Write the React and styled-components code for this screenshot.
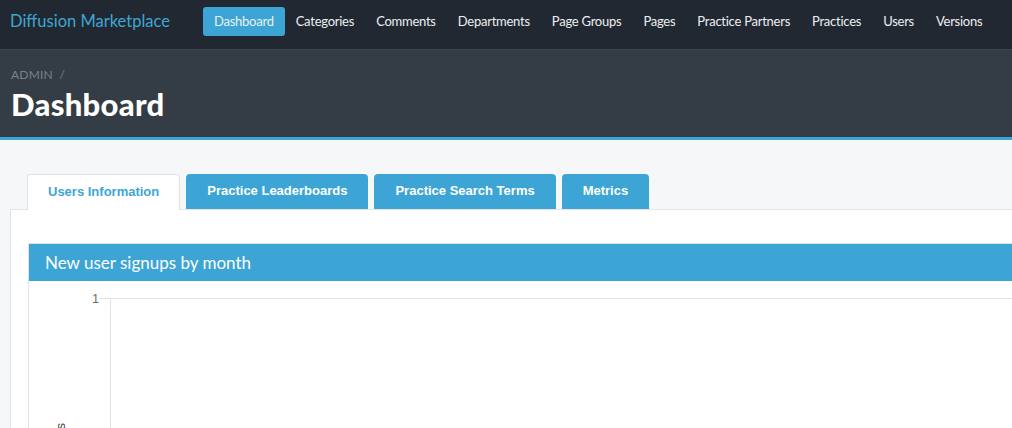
import React from 'react';
import styled, { createGlobalStyle } from 'styled-components';

const GlobalStyle = createGlobalStyle`
  body {
    margin: 0;
    background: #f6f7f9;
    font-family: 'Lato', 'Liberation Sans', sans-serif;
    overflow: hidden;
  }
`;

const Navbar = styled.nav`
  height: 49px;
  background: #222831;
  border-bottom: 1px solid #3e454e;
  display: flex;
  align-items: center;
  padding: 0 10px;
`;

const Brand = styled.div`
  flex: 0 0 193px;
  color: #3ea6d4;
  font-size: 16.5px;
  margin-top: -8px;
  white-space: nowrap;
`;

const NavItems = styled.div`
  display: flex;
  align-items: center;
  margin-top: -6px;
`;

const NavItem = styled.a`
  color: #eceff1;
  font-size: 13px;
  letter-spacing: -0.25px;
  padding: 0 11px;
  height: 29px;
  line-height: 29px;
  border-radius: 3px;
  background: ${p => (p.$active ? '#3da5d5' : 'transparent')};
  white-space: nowrap;
`;

const Header = styled.header`
  background: #343c45;
  border-bottom: 3px solid #3da5d5;
  height: 90px;
  padding: 0 11px;
  box-sizing: border-box;
`;

const Crumb = styled.div`
  padding-top: 17px;
  font-size: 12px;
  color: #79828b;
  letter-spacing: 0.2px;
`;

const Title = styled.h1`
  margin: 3px 0 0;
  font-size: 31px;
  font-weight: 900;
  color: #ffffff;
  letter-spacing: 0.3px;
`;

const Content = styled.main`
  padding: 34px 0 0 10px;
`;

const Tabs = styled.div`
  display: flex;
  align-items: flex-start;
  gap: 6px;
  padding-left: 17px;
  margin-bottom: -1px;
  position: relative;
  z-index: 1;
`;

const Tab = styled.div`
  font-family: 'Liberation Sans', Arial, sans-serif;
  font-weight: 700;
  font-size: 13px;
  box-sizing: border-box;
  display: flex;
  align-items: center;
  border-radius: 4px 4px 0 0;
  white-space: nowrap;
  ${p =>
    p.$active
      ? `
    height: 36px;
    padding: 0 20px 2px;
    background: #ffffff;
    color: #3ea6d4;
    border: 1px solid #dfe3e8;
    border-bottom: none;
  `
      : `
    height: 35px;
    padding: 0 21px 3px;
    background: #3da5d5;
    color: #ffffff;
  `}
`;

const Panel = styled.section`
  background: #ffffff;
  border: 1px solid #e3e5e8;
  border-right: none;
  padding: 33px 0 0 17px;
  height: 300px;
`;

const Card = styled.div`
  border: 1px solid #e3e3e3;
  border-right: none;
`;

const CardHeader = styled.div`
  background: #3da5d5;
  color: #ffffff;
  height: 37px;
  display: flex;
  align-items: center;
  padding-left: 16px;
  font-size: 17px;
`;

const Chart = styled.svg`
  display: block;
  width: 100%;
  height: 160px;
`;

const tabs = ['Users Information', 'Practice Leaderboards', 'Practice Search Terms', 'Metrics'];
const links = ['Dashboard', 'Categories', 'Comments', 'Departments', 'Page Groups', 'Pages', 'Practice Partners', 'Practices', 'Users', 'Versions'];

export default function App() {
  return (
    <>
      <GlobalStyle />
      <Navbar>
        <Brand>Diffusion Marketplace</Brand>
        <NavItems>
          {links.map((l, i) => (
            <NavItem key={l} $active={i === 0}>{l}</NavItem>
          ))}
        </NavItems>
      </Navbar>
      <Header>
        <Crumb>ADMIN&nbsp; /</Crumb>
        <Title>Dashboard</Title>
      </Header>
      <Content>
        <Tabs>
          {tabs.map((t, i) => (
            <Tab key={t} $active={i === 0}>{t}</Tab>
          ))}
        </Tabs>
        <Panel>
          <Card>
            <CardHeader>New user signups by month</CardHeader>
            <Chart>
              <line x1="71" y1="17.5" x2="2000" y2="17.5" stroke="#e2e2e2" />
              <line x1="81.5" y1="17" x2="81.5" y2="300" stroke="#e2e2e2" />
              <text x="70" y="22" fontSize="12" fill="#666" textAnchor="end" fontFamily="Liberation Sans, sans-serif">1</text>
              <text x="0" y="0" fontSize="13" fill="#444" fontFamily="Liberation Sans, sans-serif" transform="translate(36 176) rotate(-90)">Users</text>
            </Chart>
          </Card>
        </Panel>
      </Content>
    </>
  );
}
